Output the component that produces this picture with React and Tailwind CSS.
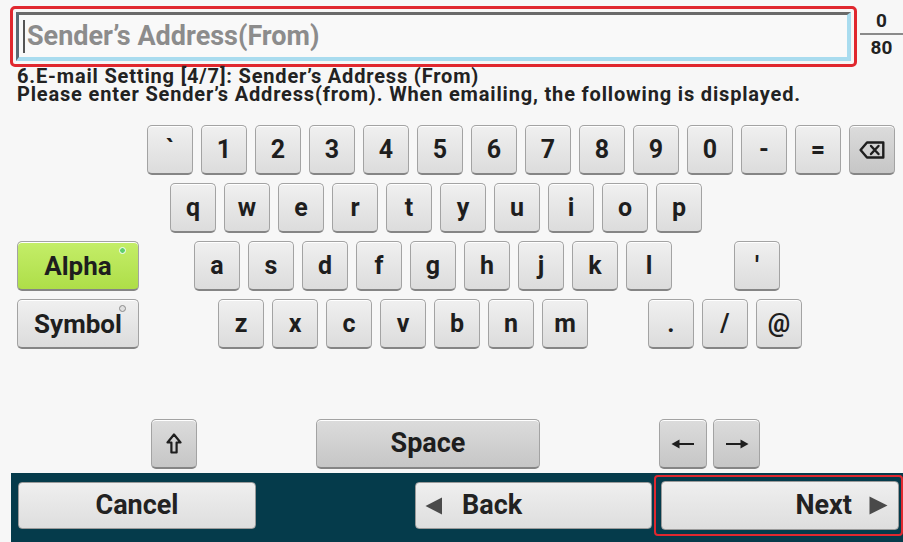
import React from "react";

const keyBase =
  "h-[50px] rounded-[5px] border border-[#a3a3a3] border-b-[2px] border-b-[#858585] flex items-center justify-center font-bold text-[#1e1e1e] shadow-[inset_0_1px_0_#ffffff]";
const lightKey = "bg-linear-to-b from-[#f0f0f0] to-[#dcdcdc]";
const darkKey = "bg-linear-to-b from-[#dcdcdc] to-[#c6c6c6]";

function Key({ children, dark = false, className = "" }) {
  return (
    <div className={`${keyBase} ${dark ? darkKey : lightKey} w-[46px] text-[25px] leading-none ${className}`}>
      {children}
    </div>
  );
}

function BackspaceIcon() {
  return (
    <svg width="26" height="18" viewBox="0 0 26 18" fill="none" stroke="#1e1e1e" strokeWidth="2.4" strokeLinejoin="round" className="shrink-0">
      <path d="M8 1.5 H24.3 V16.5 H8 L1.6 9 Z" />
      <path d="M12 5 L19.5 13 M19.5 5 L12 13" strokeLinecap="round" />
    </svg>
  );
}

function ShiftIcon() {
  return (
    <svg width="16" height="21" viewBox="0 0 16 21" fill="none" stroke="#1e1e1e" strokeWidth="2.2" strokeLinejoin="round" className="shrink-0">
      <path d="M8 1.5 L14.5 9.5 H10.6 V19.5 H5.4 V9.5 H1.5 Z" />
    </svg>
  );
}

function ArrowIcon({ dir }) {
  return (
    <svg width="24" height="10" viewBox="0 0 24 10" className="shrink-0">
      {dir === "left" ? (
        <g fill="#1e1e1e">
          <rect x="6" y="4" width="17" height="2" />
          <path d="M0.5 5 L8.5 0.5 V9.5 Z" />
        </g>
      ) : (
        <g fill="#1e1e1e">
          <rect x="1" y="4" width="17" height="2" />
          <path d="M23.5 5 L15.5 0.5 V9.5 Z" />
        </g>
      )}
    </svg>
  );
}

const bottomBtn =
  "rounded-[4px] border border-[#9a9a9a] bg-linear-to-b from-[#efefef] to-[#dedede] flex items-center text-[27px] font-bold text-[#222] leading-none";

export default function App() {
  const row1 = ["`", "1", "2", "3", "4", "5", "6", "7", "8", "9", "0", "-", "="];
  const row2 = ["q", "w", "e", "r", "t", "y", "u", "i", "o", "p"];
  const row3 = ["a", "s", "d", "f", "g", "h", "j", "k", "l"];
  const row4 = ["z", "x", "c", "v", "b", "n", "m"];

  return (
    <div className="w-[903px] h-[542px] overflow-hidden bg-[#f7f7f7] flex flex-col font-['Roboto','Liberation_Sans',sans-serif]">
      {/* Input row */}
      <div className="flex items-start pt-[6px] pl-[10px]">
        <div className="w-[847px] h-[61px] rounded-[5px] border-[3px] border-[#e0282f] p-[3px]">
          <div className="relative w-full h-full bg-[#f9f9f9] border-t-[3px] border-l-[3px] border-t-[#6a6a6a] border-l-[#5a6a74] border-b-[4px] border-r-[4px] border-b-[#a9dcef] border-r-[#a9dcef] flex items-center">
            <div className="ml-[4px] w-[2px] h-[33px] bg-[#555]" />
            <span className="ml-[2px] text-[27px] font-bold text-[#8c8c8c] leading-none">
              Sender’s Address(From)
            </span>
          </div>
        </div>
        <div className="ml-[3px] w-[43px] flex flex-col items-center pt-[4px]">
          <div className="text-[19px] font-bold leading-[22px] text-[#222]">0</div>
          <div className="w-full h-[2px] bg-[#8a8a8a] mt-[1px]" />
          <div className="text-[19px] font-bold leading-[22px] text-[#222] mt-[2px]">80</div>
        </div>
      </div>

      {/* Info text */}
      <div className="pl-[17px] text-[20px] font-bold leading-[18px] text-[#222] tracking-[0.83px] whitespace-nowrap">
        <div>6.E-mail Setting [4/7]: Sender’s Address (From)</div>
        <div>Please enter Sender’s Address(from). When emailing, the following is displayed.</div>
      </div>

      {/* Row 1 */}
      <div className="flex gap-[8px] pl-[147px] mt-[22px]">
        {row1.map((k) => (
          <Key key={k}>{k}</Key>
        ))}
        <Key dark>
          <BackspaceIcon />
        </Key>
      </div>

      {/* Row 2 */}
      <div className="flex gap-[8px] pl-[170px] mt-[8px]">
        {row2.map((k) => (
          <Key key={k}>{k}</Key>
        ))}
      </div>

      {/* Row 3 */}
      <div className="flex pl-[17px] mt-[8px]">
        <div className={`${keyBase} relative w-[122px] text-[26px] leading-none bg-linear-to-b from-[#c4ee68] to-[#aede48] border-[#8aa055] border-b-[#6f8440]`}>
          Alpha
          <span className="absolute top-[5px] right-[12px] w-[7px] h-[7px] rounded-full bg-[#5fcf6a] border border-white" />
        </div>
        <div className="flex gap-[8px] ml-[55px]">
          {row3.map((k) => (
            <Key key={k}>{k}</Key>
          ))}
          <Key className="ml-[54px]">'</Key>
        </div>
      </div>

      {/* Row 4 */}
      <div className="flex pl-[17px] mt-[8px]">
        <div className={`${keyBase} ${lightKey} relative w-[122px] text-[26px] leading-none`}>
          Symbol
          <span className="absolute top-[5px] right-[12px] w-[7px] h-[7px] rounded-full bg-[#e0e0e0] border border-[#8a8a8a]" />
        </div>
        <div className="flex gap-[8px] ml-[79px]">
          {row4.map((k) => (
            <Key key={k}>{k}</Key>
          ))}
          <Key className="ml-[52px]">.</Key>
          <Key>/</Key>
          <Key>@</Key>
        </div>
      </div>

      {/* Row 5 */}
      <div className="flex pl-[151px] mt-[70px]">
        <Key dark>
          <ShiftIcon />
        </Key>
        <div className={`${keyBase} ${darkKey} w-[224px] ml-[119px] text-[27px] leading-none`}>Space</div>
        <Key dark className="ml-[119px] w-[48px]">
          <ArrowIcon dir="left" />
        </Key>
        <Key dark className="ml-[6px] w-[47px]">
          <ArrowIcon dir="right" />
        </Key>
      </div>

      {/* Bottom bar */}
      <div className="mt-[4px] ml-[11px] flex-1 bg-[#053b4b] flex items-start">
        <div className={`${bottomBtn} justify-center ml-[7px] mt-[9px] w-[238px] h-[47px]`}>Cancel</div>
        <div className={`${bottomBtn} ml-[159px] mt-[9px] w-[237px] h-[47px] pl-[9px]`}>
          <svg width="18" height="18" viewBox="0 0 18 18" className="shrink-0">
            <path d="M0.5 9 L17 0.5 V17.5 Z" fill="#4a4a4a" />
          </svg>
          <span className="ml-[19px]">Back</span>
        </div>
        <div className="ml-[2px] mt-[2px] w-[249px] h-[61px] rounded-[4px] border-[2px] border-[#e0282f] pl-[5px] pt-[4px]">
          <div className={`${bottomBtn} justify-end w-[238px] h-[49px] pr-[10px]`}>
            <span>Next</span>
            <svg width="19" height="19" viewBox="0 0 19 19" className="ml-[17px] shrink-0">
              <path d="M18.5 9.5 L0.5 0.5 V18.5 Z" fill="#4a4a4a" />
            </svg>
          </div>
        </div>
      </div>
    </div>
  );
}
